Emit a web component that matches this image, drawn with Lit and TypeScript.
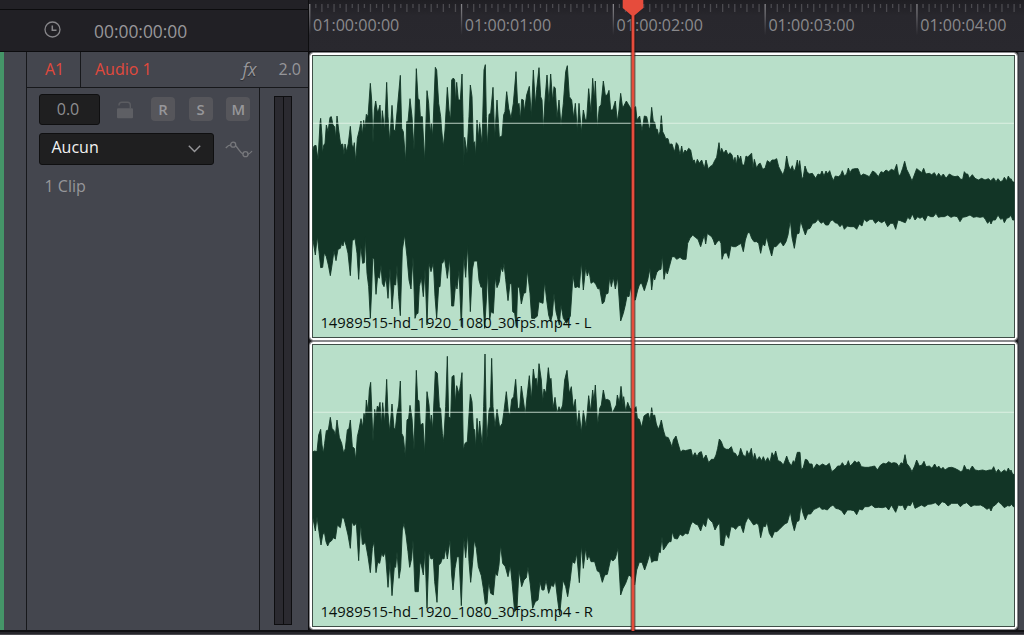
import { LitElement, html, css, svg } from "lit";
import { customElement, property } from "lit/decorators.js";

/** A run of contour samples, stored in thirds of a pixel from (x, y). */
interface Run {
  x: number;
  y: number;
  pts: string;
}

const LEFT_TOP: Run[] = [
  {
    x: 308, y: 50,
    pts: "15,300 18,288 24,286 30,330 36,220 38,205 42,260 43,310 47,286 51,280 55,225 60,245 66,202 70,200 75,225 80,230 83,265 87,198 92,240 98,284 104,282 108,315 111,282 116,305 121,280 127,229 132,285 136,295 139,278 143,335 148,265 154,240 159,213 163,255 167,211 171,235 175,193 180,200 187,100 191,150 195,280 199,180 203,153 208,185 212,180 216,165 220,240 223,182 230,240 236,97 240,200 245,275 252,166 257,240 262,242 269,165 277,76 281,235 286,245 293,335 296,215 300,215 306,146 312,200 318,300 325,56 330,145 334,150 337,200 343,200 350,335 357,122 362,160 367,250 370,220 374,260 382,52 386,60 392,160 398,200 401,240 406,290 411,240 418,112 423,180 428,210 431,90 436,84 440,90 443,160 446,97 451,150 457,150 462,72 465,200 467,345 470,262 477,310 483,200 487,105 492,140 496,280 500,275 503,320 507,210 511,265 515,218",
  },
  {
    x: 480, y: 50,
    pts: "0,230 6,280 12,60 16,44 19,200 22,290 27,193 32,190 39,112 44,265 51,150 58,262 66,258 71,195 75,185 80,125 86,175 93,205 100,160 108,65 113,165 117,160 121,210 125,148 130,150 133,185 140,135 148,109 154,200 160,60 166,165 170,118 177,53 182,140 186,150 190,240 195,150 201,75 207,160 212,72 218,155 222,110 226,115 231,205 237,150 243,228 250,160 257,65 262,47 268,140 275,150 281,205 286,160 292,245 297,160 304,248 310,180 316,210 320,208 326,116 333,190 338,85 343,150 346,93 352,235 358,170 363,165 370,93 376,136 382,135 387,121 392,180 398,180 406,153 412,215 417,180 422,130 428,175 433,165 439,153 445,163 455,180 467,170 471,210 479,198 486,243 493,198 500,200 508,238",
  },
  {
    x: 650, y: 100,
    pts: "0,82 5,22 10,65 14,66 18,88 22,88 26,108 30,95 34,47 38,95 43,105 47,116 54,116 58,133 66,132 70,145 74,155 79,128 84,135 90,165 95,138 99,162 105,150 110,155 116,145 122,150 128,182 133,180 137,195 142,178 148,190 155,180 163,205 168,180 175,208 180,200 188,195 194,182 200,172 207,128 211,160 215,145 221,160 228,150 234,165 240,158 246,165 251,185 255,172 259,195 263,165 268,180 272,168 277,195 283,195 288,168 294,172 299,165 305,160 309,205 313,178 320,205 326,192 331,190 338,208 345,205 352,182 360,188 366,180 373,180 380,176 386,200 392,212 399,225 405,205 410,168 415,195 421,210 427,197 431,212 436,208 442,180 446,205 449,182 456,238 460,230 465,198 471,215 478,222 487,220 497,235 504,222 511,225 516,213 522,228 528,213 533,222 539,212 544,228 550,242 556,228 565,230 572,225 577,212 583,228 590,222 595,204 600,218 606,208 615,206 624,206 632,228 640,222 648,225 658,230 668,213 676,218 685,230 693,215 700,218 708,210 716,215 724,208 733,212 740,193 746,228 752,222 758,205 764,184 770,208 777,222 786,243 793,225 800,206 808,212 815,218 821,205 827,222 838,220 845,224 853,218 860,230 866,220 873,230 880,222 888,235 898,222 908,228 915,230 924,228 932,238 938,238 943,215 948,222 953,222 958,235 967,224 975,235 985,240 995,235 1005,240 1015,236 1022,242 1031,234 1038,245 1044,236 1051,245 1058,242 1063,232 1070,242 1075,228 1080,238 1083,236 1088,246 1092,246",
  },
];

const LEFT_BOTTOM: Run[] = [
  {
    x: 308, y: 190,
    pts: "15,150 22,195 28,138 33,185 38,233 44,232 49,188 55,200 61,225 67,257 72,225 78,182 84,212 90,178 97,175 101,160 105,168 109,150 115,168 120,190 127,257 133,150 137,150 141,145 147,190 152,268 158,165 164,220 169,218 172,140 177,250 182,290 187,385 191,300 194,205 198,205 204,313 209,258 214,265 219,225 223,280 228,290 234,262 240,325 246,235 252,357 258,283 263,285 267,225 272,320 277,377 283,180 290,135 297,200 303,270 309,297 315,200 321,385 325,372 330,370 334,290 340,262 346,320 351,237 357,405 363,220 369,245 376,218 381,320 386,385 392,290 396,290 401,220 405,218 409,203 414,235 418,265 425,205 431,348 437,348 443,280 447,297 453,240 460,410 467,195 473,262 479,165 487,365 493,240 498,213 508,213 513,270",
  },
  {
    x: 480, y: 190,
    pts: "3,292 7,290 9,330 14,415 19,330 23,240 29,390 33,365 40,370 46,262 51,293 58,275 63,232 68,245 72,220 77,268 84,332 90,280 95,282 98,365 104,370 109,410 113,290 118,293 124,342 131,310 137,308 142,240 150,310 155,385 165,385 172,378 177,335 184,338 189,340 194,275 200,330 206,375 212,395 217,375 222,310 228,365 238,405 243,345 250,385 260,400 271,378 279,255 285,293 293,290 298,293 304,215 310,300 317,232 322,258 327,240 333,280 340,275 347,282 354,297 359,295 367,342 373,335 377,313 384,310 389,262 394,290 400,262 406,297 413,262 422,393 430,370 436,345 441,318 447,320 452,290 458,330 466,330 473,300 479,282 485,280 493,302 503,270",
  },
  {
    x: 650, y: 100,
    pts: "0,505 5,570 10,530 14,540 20,518 26,510 33,508 37,465 42,538 47,510 52,522 58,500 66,470 73,470 80,478 90,472 98,478 108,478 113,430 120,415 128,405 136,412 144,418 152,440 158,420 163,405 167,432 172,400 178,405 185,410 190,420 195,435 202,425 208,420 213,430 216,478 222,460 230,458 236,475 243,437 250,440 257,440 265,435 273,430 280,455 286,420 293,398 299,398 305,415 312,425 320,425 326,430 332,460 338,430 344,438 350,410 357,440 365,468 371,440 378,440 385,432 392,425 400,438 408,425 414,405 421,360 426,412 433,445 440,402 447,400 452,362 459,385 466,405 472,388 480,385 488,370 496,368 504,358 513,370 520,365 527,375 535,375 542,362 548,360 555,368 562,370 570,380 577,372 583,388 592,378 600,380 612,380 620,388 628,372 636,378 642,358 650,365 660,358 668,358 676,370 685,362 695,368 704,362 713,380 722,370 730,370 737,388 744,360 751,362 758,365 766,368 773,352 780,358 787,342 795,360 803,350 810,355 817,350 825,362 833,345 842,350 850,350 858,340 865,352 873,350 883,350 893,345 903,352 912,348 922,350 930,365 938,352 948,350 960,345 970,352 980,350 990,352 1000,350 1006,358 1013,370 1019,362 1023,372 1028,360 1036,360 1044,345 1052,358 1058,355 1063,368 1070,355 1078,352 1083,345 1088,360 1092,360",
  },
];

const RIGHT_TOP: Run[] = [
  {
    x: 308, y: 340,
    pts: "15,335 20,333 27,335 32,285 38,268 42,315 46,340 50,310 55,272 61,270 67,232 72,265 78,272 82,288 87,240 94,292 101,310 107,340 112,325 118,270 123,265 127,240 133,320 139,325 143,360 148,290 153,268 159,236 164,262 168,220 172,240 175,180 180,215 184,150 188,127 192,230 195,305 200,208 204,230 208,198 212,205 216,187 220,255 224,188 230,250 236,118 240,220 245,275 252,192 258,265 262,268 267,220 272,195 277,123 281,280 286,290 292,350 297,240 302,235 306,196 312,235 318,330 325,91 329,180 333,182 337,255 345,250 350,340 357,155 363,195 367,255 370,225 374,270 378,180 382,94 388,100 394,200 398,208 403,280 407,305 413,200 418,49 422,230 428,235 432,110 438,106 442,190 446,137 453,162 458,130 462,98 466,330 471,310 478,305 482,240 487,163 492,185 496,265 500,270 503,325 507,235 511,295 515,243 523,320 527,200 531,42 536,307 543,212 547,200 551,55 555,200 561,262 567,208 575,262 583,250 589,205 595,155 601,215 606,225 611,178 617,170 623,118 629,205 635,205 640,138 646,180 652,225 657,170 664,107 670,180 676,87 680,118 685,115 688,150 693,71 700,120 704,185 708,147 714,160 721,83 725,120 729,115 735,205 741,172 747,220 753,200 758,212 764,195 770,120 777,91 784,160 790,140 796,205 802,178 807,260 813,212 820,278 826,212 834,260 842,167 848,215 854,150 858,185 862,135 869,255 875,205 880,195 886,150 892,180 898,178 905,182 913,220 920,205 925,195 928,165 934,190 939,139 945,195 947,170 953,215 959,187 966,205 975,210 984,200 988,235 994,238 1001,262 1008,228 1016,222 1021,220",
  },
  {
    x: 650, y: 390,
    pts: "0,92 5,53 9,78 14,75 19,102 25,118 30,105 34,90 40,120 46,140 55,143 62,160 66,172 70,150 78,138 84,160 92,187 98,180 106,182 114,180 123,178 128,200 135,188 141,200 147,188 154,185 160,208 168,195 176,218 184,208 192,208 198,195 203,175 208,147 214,155 220,172 228,178 236,178 244,170 250,188 256,190 262,200 267,195 272,175 279,195 287,200 291,182 297,195 304,175 309,210 314,190 320,212 328,200 335,212 340,200 346,215 353,203 360,217 366,188 372,200 377,183 384,212 392,215 400,225 406,210 410,198 416,215 424,228 430,212 434,218 442,187 450,187 454,240 460,232 466,208 472,210 478,222 486,222 490,238 500,222 508,228 518,222 528,228 538,220 545,245 555,238 563,228 571,228 577,218 583,228 590,225 595,212 600,228 607,222 614,213 620,218 627,215 634,230 645,232 655,232 665,230 674,228 682,240 692,225 700,220 708,222 716,215 724,220 732,218 740,220 747,230 753,218 759,222 765,194 770,220 778,230 786,245 794,228 800,210 808,228 816,225 822,214 828,230 838,228 846,235 854,222 861,235 866,228 873,238 879,232 885,240 895,233 905,232 914,235 924,240 932,245 938,242 943,226 950,240 955,238 958,242 967,228 975,240 986,242 998,240 1008,243 1018,240 1026,240 1031,230 1038,248 1045,238 1053,248 1063,240 1070,246 1075,234 1080,245 1083,240 1088,253 1092,253",
  },
];

const RIGHT_BOTTOM: Run[] = [
  {
    x: 308, y: 485,
    pts: "15,100 22,138 27,95 33,140 39,180 44,150 49,140 54,170 59,183 64,172 70,168 76,158 82,162 88,120 97,128 102,98 108,100 114,125 120,150 127,190 132,110 138,122 145,115 152,227 158,115 163,178 167,178 172,170 180,215 187,263 193,190 198,170 204,263 209,232 215,235 221,205 226,215 232,200 240,307 246,230 252,332 259,245 263,247 267,200 273,280 278,250 283,135 288,115 294,150 300,200 305,247 311,220 315,165 321,320 331,320 336,230 340,240 346,270 351,195 357,370 363,200 369,222 376,220 380,290 387,352 392,240 398,235 403,220 408,222 413,190 418,222 426,165 431,270 435,315 441,250 447,215 453,215 460,362 467,155 473,218 479,145 483,230 488,292 494,230 499,165 505,190 511,245 520,272 526,310 532,358 537,355 542,290 548,325 556,330 562,265 568,272 573,240 578,180 584,235 592,245 600,275 607,240 612,290 620,380 627,370 633,255 641,305 648,285 655,278 660,245 667,300 674,370 682,350 690,345 696,290 702,315 708,315 714,285 722,325 730,300 736,305 742,285 749,345 755,390 765,285 773,305 779,335 786,290 793,230 800,235 806,205 814,293 820,180 826,250 833,190 838,225 843,210 849,230 860,230 868,258 875,262 883,292 890,270 898,268 908,222 915,228 922,220 930,190 938,330 945,310 953,295 962,270 970,275 980,300 986,255 994,232 1002,232 1010,255 1017,235",
  },
  {
    x: 650, y: 390,
    pts: "0,490 5,517 12,512 22,512 26,485 31,488 36,440 40,480 46,472 52,462 58,455 63,455 67,425 73,445 82,447 90,432 98,438 106,430 114,432 122,405 128,395 136,402 144,405 152,423 159,400 167,410 173,380 180,390 188,398 195,420 203,405 209,400 212,465 221,467 227,430 236,445 243,410 250,412 257,418 264,408 272,405 280,428 286,400 294,382 302,392 311,405 320,400 326,405 332,443 340,408 346,410 351,395 358,430 366,443 373,425 381,425 388,418 396,410 404,402 412,398 421,365 426,395 433,422 440,395 447,392 453,345 459,370 466,390 473,372 482,372 492,358 500,355 508,350 516,358 524,357 532,360 541,350 549,345 557,355 566,357 575,362 583,374 592,360 602,360 612,362 620,374 628,357 637,360 644,350 655,350 665,345 675,353 686,352 697,353 708,350 716,360 724,345 730,355 737,367 745,345 752,347 758,345 765,360 773,345 781,347 788,333 795,355 805,350 814,345 824,350 834,343 845,342 856,338 866,347 876,335 885,338 894,348 905,340 915,340 923,340 931,350 940,342 950,338 963,350 972,345 982,346 992,345 1001,350 1011,358 1018,353 1023,363 1028,350 1036,345 1045,335 1054,343 1063,353 1072,347 1080,348 1084,342 1090,350 1092,350",
  },
];

function contour(runs: Run[]): string[] {
  return runs.flatMap((run) =>
    run.pts.split(" ").map((pair) => {
      const [px, py] = pair.split(",").map(Number);
      return `${(run.x + px / 3).toFixed(2)} ${(run.y + py / 3).toFixed(2)}`;
    }),
  );
}

function waveform(top: Run[], bottom: Run[]): string {
  return `M${contour(top).join("L")}L${contour(bottom).reverse().join("L")}Z`;
}

@customElement("time-ruler")
class TimeRuler extends LitElement {
  static styles = css`
    :host {
      display: block;
      height: 51px;
      position: relative;
      overflow: hidden;
      background: linear-gradient(#1f1e23, #28272d 16px, #29282e);
      border-bottom: 1px solid #09090b;
    }
    .ticks {
      position: absolute;
      inset: 0;
      display: block;
    }
    .labels {
      display: flex;
      padding: 13px 0 0 4px;
      position: relative;
    }
    .label {
      flex: 0 0 151.8px;
      font-size: 16.1px;
      line-height: 24px;
      color: #8a898c;
      white-space: nowrap;
    }
  `;
  render() {
    const ticks = [];
    for (let i = 0; i < 118; i++) {
      const x = 1 + i * 6.072;
      if (i % 25 === 0) {
        ticks.push(svg`<rect x=${x - 0.9} y="4" width="1.3" height="31" fill="url(#fade)" />`);
      } else {
        const long = (i % 25) % 2 === 0;
        ticks.push(svg`<rect x=${x - 0.9} y="4" width="1.3" height=${long ? 8 : 4} fill="#4b4a4f" />`);
      }
    }
    return html`
      <svg class="ticks" width="715" height="51">
        <defs>
          <linearGradient id="fade" gradientUnits="userSpaceOnUse" x1="0" y1="4" x2="0" y2="35">
            <stop offset="0" stop-color="#87868a" />
            <stop offset="0.4" stop-color="#66656a" />
            <stop offset="1" stop-color="#29282e" />
          </linearGradient>
        </defs>
        ${ticks}
      </svg>
      <div class="labels">
        ${[0, 1, 2, 3, 4].map((s) => html`<span class="label">01:00:0${s}:00</span>`)}
      </div>
    `;
  }
}

@customElement("audio-clip")
class AudioClip extends LitElement {
  @property() name = "";
  @property() wave = "";
  @property({ type: Number }) top = 0;
  @property({ type: Number }) line = 0;

  static styles = css`
    :host {
      display: block;
      box-sizing: border-box;
      position: relative;
      background: #b8dfc9;
      border: 2px solid #fff;
      border-radius: 3px;
      outline: 1px solid #8a8a8d;
      outline-offset: 0;
    }
    .body {
      box-sizing: border-box;
      height: 100%;
      border: 1px solid #3f4e47;
      display: flex;
      flex-direction: column;
      justify-content: flex-end;
    }
    .wave {
      position: absolute;
      inset: 0;
      width: 100%;
      height: 100%;
      display: block;
    }
    .name {
      position: relative;
      padding: 0 0 5.5px 7.4px;
      font-size: 14.8px;
      line-height: 20px;
      color: #08100c;
      white-space: nowrap;
    }
  `;
  render() {
    return html`
      <div class="body">
        <svg class="wave" viewBox="312 ${this.top} 703 283" preserveAspectRatio="none">
          <path d=${this.wave} fill="#123526" stroke="#123526" stroke-width="0.9" stroke-linejoin="bevel" />
          <rect x="313" y=${this.line - 1} width="701" height="1" fill="#e4f5ea" opacity="0.2" />
          <rect x="313" y=${this.line} width="701" height="1" fill="#e4f5ea" opacity="0.6" />
        </svg>
        <span class="name">${this.name}</span>
      </div>
    `;
  }
}

@customElement("track-header")
class TrackHeader extends LitElement {
  static styles = css`
    :host {
      display: flex;
      box-sizing: border-box;
      height: 579px;
      background: #44464e;
      color: #96969a;
      font-size: 16px;
    }
    .colour {
      width: 4px;
      background: #459568;
    }
    .gutter {
      width: 22px;
      border-right: 1px solid #17181b;
    }
    .main {
      flex: 1;
      display: flex;
      flex-direction: column;
    }
    .title {
      display: flex;
      align-items: center;
      height: 35px;
      border-bottom: 1px solid #17181b;
    }
    .id {
      box-sizing: border-box;
      width: 54px;
      height: 35px;
      line-height: 35px;
      padding-left: 18px;
      border-right: 1px solid #17181b;
      color: #e2493c;
    }
    .name {
      flex: 1;
      padding-left: 14px;
      color: #e2493c;
      line-height: 35px;
      height: 35px;
    }
    .fx {
      font-style: italic;
      font-size: 17.8px;
      font-weight: 500;
      line-height: 34px;
      height: 35px;
      width: 36px;
      color: #96969a;
      text-shadow: 0 1px 1px #2b2c31;
    }
    .format {
      width: 29.5px;
      line-height: 35px;
      height: 35px;
    }
    .content {
      flex: 1;
      display: flex;
    }
    .controls {
      box-sizing: border-box;
      flex: none;
      width: 233px;
      padding: 6px 0 0 12px;
      border-right: 1px solid #17181b;
    }
    .row {
      display: flex;
      align-items: center;
    }
    .row > * {
      flex: none;
    }
    .level {
      box-sizing: border-box;
      width: 61px;
      height: 31px;
      line-height: 28px;
      padding-right: 3px;
      text-align: center;
      background: #1f1f20;
      border: 1px solid #0f0f10;
      border-radius: 3px;
      color: #8e8e90;
    }
    .lock {
      margin: 0 17px 0 16px;
      display: block;
    }
    .btn {
      width: 24px;
      height: 24px;
      line-height: 24px;
      margin: -1px 13.7px 0 0;
      border-radius: 4px;
      background: #56565b;
      color: #97979a;
      font-size: 14.8px;
      font-weight: 600;
      text-align: center;
    }
    .second {
      margin-top: 8px;
    }
    .select {
      box-sizing: border-box;
      width: 175px;
      height: 32px;
      padding: 0 12px 0 11.5px;
      display: flex;
      align-items: center;
      justify-content: space-between;
      background: #1f1f20;
      border: 1px solid #0f0f10;
      border-radius: 3px;
      color: #f2f2f2;
      line-height: 26px;
    }
    .value {
      padding-bottom: 4px;
    }
    .curve {
      margin-left: 11px;
      display: block;
    }
    .clips {
      padding: 9px 0 0 5.5px;
      line-height: 24px;
    }
    .meter {
      box-sizing: border-box;
      width: 18px;
      height: 529px;
      margin: 8px 0 0 14.4px;
      border: 1px solid #0e0e10;
      background: #2b2a30;
      display: flex;
      justify-content: center;
    }
    .split {
      width: 1px;
      background: #0e0e10;
    }
  `;
  render() {
    return html`
      <div class="colour"></div>
      <div class="gutter"></div>
      <div class="main">
        <div class="title">
          <span class="id">A1</span>
          <span class="name">Audio 1</span>
          <span class="fx">fx</span>
          <span class="format">2.0</span>
        </div>
        <div class="content">
          <div class="controls">
            <div class="row">
              <span class="level">0.0</span>
              <svg class="lock" width="18" height="18" viewBox="0 0 18 18">
                <path d="M3 4.5V4Q3 1.2 5.8 1.2H11.5Q14.3 1.2 14.3 4V7.5" fill="none" stroke="#5b5c61" stroke-width="1.4" />
                <rect x="1" y="7.3" width="16" height="10" rx="1" fill="#5e5f64" />
              </svg>
              <span class="btn">R</span>
              <span class="btn">S</span>
              <span class="btn">M</span>
            </div>
            <div class="row second">
              <div class="select">
                <span class="value">Aucun</span>
                <svg width="13" height="8" viewBox="0 0 13 8">
                  <path d="M0.8 0.8L6.5 6.6L12.2 0.8" fill="none" stroke="#97979a" stroke-width="1.4" />
                </svg>
              </div>
              <svg class="curve" width="28" height="18" viewBox="0 0 28 18">
                <g fill="none" stroke="#77787c" stroke-width="1.3">
                  <path d="M0.8 8C2.5 6 3.8 5 5.8 4.8M10.6 5.8C13.5 8.5 15 12.5 18 14M22.8 14.3C24.7 13.7 26 12.5 27 11" />
                  <circle cx="8.2" cy="4.7" r="2.5" />
                  <circle cx="20.5" cy="14.2" r="2.5" />
                </g>
              </svg>
            </div>
            <div class="clips">1 Clip</div>
          </div>
          <div class="meter"><span class="split"></span></div>
        </div>
      </div>
    `;
  }
}

@customElement("app-root")
class AppRoot extends LitElement {
  static styles = css`
    :host {
      display: block;
      position: relative;
      width: 1024px;
      height: 635px;
      overflow: hidden;
      background: #44464e;
      font-family: "Open Sans", "Noto Sans", sans-serif;
    }
    .layout {
      display: grid;
      grid-template-columns: 309px 715px;
      grid-template-rows: 630px 5px;
    }
    .left {
      box-sizing: border-box;
      border-right: 1px solid #0d0d0f;
    }
    .strip {
      height: 9px;
      background: #222126;
      border-bottom: 1px solid #0c0c0e;
    }
    .timecode {
      display: flex;
      align-items: center;
      height: 41px;
      background: #212025;
      border-bottom: 1px solid #0c0c0e;
    }
    .clock {
      margin: 0 33px 2px 44px;
      display: block;
    }
    .tc {
      font-size: 17.4px;
      font-weight: 500;
      line-height: 24px;
      color: #98979a;
    }
    .clips {
      box-sizing: border-box;
      height: 578px;
      padding: 1px 7px 1px 1px;
      display: grid;
      grid-template-rows: 287px 287px;
      row-gap: 2px;
      background: linear-gradient(90deg, #1b1b1e 707px, #0f0f12 708px, #44464e 710px);
    }
    .foot {
      grid-column: 1 / 3;
      box-sizing: border-box;
      background: #26252b;
      border-top: 2px solid #111114;
      border-bottom: 1px solid #4a494e;
    }
    .playhead {
      position: absolute;
      left: 618px;
      top: 0;
      display: block;
    }
  `;
  render() {
    return html`
      <div class="layout">
        <div class="left">
          <div class="strip"></div>
          <div class="timecode">
            <svg class="clock" width="17" height="17" viewBox="0 0 17 17">
              <circle cx="8.5" cy="8.5" r="7.5" fill="none" stroke="#87868a" stroke-width="1.3" />
              <path d="M8.3 4.5V9.2H12.5" fill="none" stroke="#87868a" stroke-width="1.5" />
            </svg>
            <span class="tc">00:00:00:00</span>
          </div>
          <track-header></track-header>
        </div>
        <div class="right">
          <time-ruler></time-ruler>
          <div class="clips">
            <audio-clip
              name="14989515-hd_1920_1080_30fps.mp4 - L"
              .wave=${waveform(LEFT_TOP, LEFT_BOTTOM)}
              .top=${55}
              .line=${123}
            ></audio-clip>
            <audio-clip
              name="14989515-hd_1920_1080_30fps.mp4 - R"
              .wave=${waveform(RIGHT_TOP, RIGHT_BOTTOM)}
              .top=${344}
              .line=${412}
            ></audio-clip>
          </div>
        </div>
        <div class="foot"></div>
      </div>
      <svg class="playhead" width="30" height="631" viewBox="0 0 30 631">
        <rect x="12.6" y="14" width="4.8" height="617" fill="#1c1210" opacity="0.65" />
        <path d="M4.7 0H25.3V8L16.4 15.4V631H13.6V15.4L4.7 8Z" fill="#e64c3c" />
      </svg>
    `;
  }
}
